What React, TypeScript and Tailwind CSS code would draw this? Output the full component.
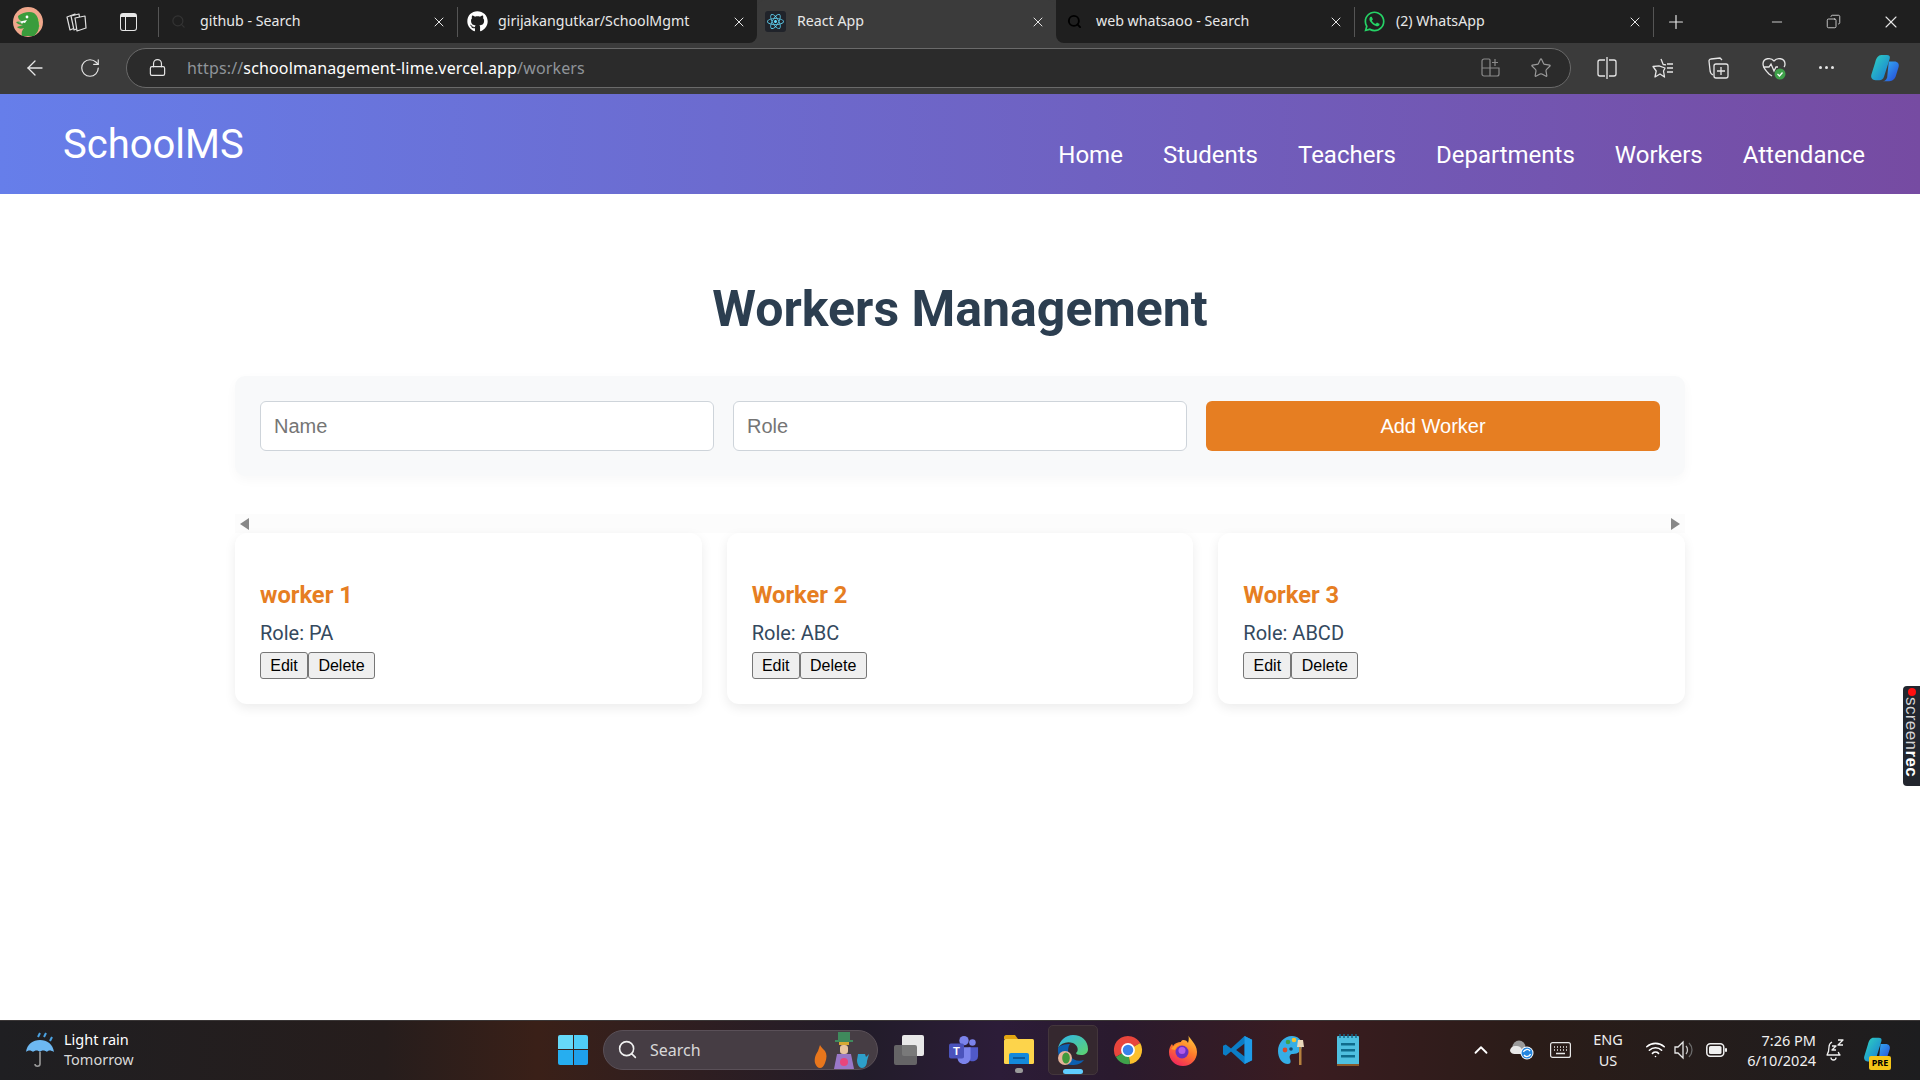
import { FaGithub, FaReact, FaWhatsapp } from "react-icons/fa6";
import { ArrowLeft, ChevronUp, Copy, Lock, Minus, Plus, RotateCw, Search, Star, Wifi, X } from "lucide-react";
import type { ReactNode } from "react";

const Copilot = ({ size = 30 }: { size?: number }) => (
  <svg width={size} height={size} viewBox="0 0 32 32">
    <defs>
      <linearGradient id="cpA" x1="0" y1="0" x2="1" y2="1">
        <stop offset="0" stopColor="#2fd6c0" />
        <stop offset="1" stopColor="#1877d6" />
      </linearGradient>
      <linearGradient id="cpB" x1="0" y1="0" x2="1" y2="1">
        <stop offset="0" stopColor="#35b6f5" />
        <stop offset="1" stopColor="#2546d6" />
      </linearGradient>
    </defs>
    <path d="M20 9h6c3.500 0 5.500 2.500 4.500 6l-2.800 9c-1 3.500-3.500 6-7.200 6h-7c2.500 0 4-1.500 4.800-4z" fill="url(#cpB)" />
    <path d="M12 2h6c2.500 0 3.800 1.200 3 4l-6 19c-.8 2.800-2.500 4-5 4H6c-3.500 0-5.500-2.500-4.500-6l4-13C6.700 5 9 2 12 2z" fill="url(#cpA)" />
  </svg>
);

const Dino = () => (
  <svg width="30" height="30" viewBox="0 0 30 30">
    <circle cx="15" cy="15" r="15" fill="#f0a78c" />
    <path d="M5 9c5-4 12-5 16-3 4 3 5 8 5 13 0 4-2 7-5 10H9c-1-3 0-6 2-8-3 1-5 1-7-1l6-2c-3 0-6-1-7-3l5-1C6 13 5 11 5 9z" fill="#3a9c3c" />
    <circle cx="14" cy="10" r="1.400" fill="#fff" />
    <path d="M5 15l9-2-2 3-2-.5-1 1.500-1-1.500z" fill="#fff" />
    <path d="M25 12l2 1-1 2zM26 18l2 1-2 1z" fill="#b7d84b" />
  </svg>
);

const Chrome = () => (
  <svg width="30" height="30" viewBox="0 0 32 32">
    <path d="M16 16L3 23.500A15 15 0 0 1 29 8.500z" fill="#e8453c" />
    <path d="M16 16L29 8.500A15 15 0 0 1 18 30.900z" fill="#fbc02d" />
    <path d="M16 16l2 14.900A15 15 0 0 1 3 23.500z" fill="#3fa14a" />
    <circle cx="16" cy="16" r="7.400" fill="#fff" />
    <circle cx="16" cy="16" r="5.600" fill="#3b82e8" />
  </svg>
);

const Firefox = () => (
  <svg width="30" height="32" viewBox="0 0 30 32">
    <defs>
      <linearGradient id="ffA" x1="0.8" y1="0" x2="0.3" y2="1">
        <stop offset="0" stopColor="#ffd23d" />
        <stop offset="0.5" stopColor="#ff7a2b" />
        <stop offset="1" stopColor="#f0265c" />
      </linearGradient>
    </defs>
    <path d="M20 0c0 4 9 9 9 18 0 8-6 14-14 14S1 26 1 18c0-3 1-6 3-8l1 2c2-3 5-4 8-4 0-1 1-2 2-2 3 0 4 1 5 3 1-3 1-6 0-9z" fill="url(#ffA)" />
    <circle cx="14" cy="18" r="6.500" fill="#6a2fc0" />
    <circle cx="14" cy="16.500" r="3.500" fill="#b35ae6" />
    <path d="M3 15c3-4 7-6 11-5-4 1-6 3-7 6z" fill="#ff9c2b" />
  </svg>
);

const VSCode = () => (
  <svg width="30" height="30" viewBox="0 0 32 32">
    <path d="M23 1L8.500 14.500 3 10 0 11.500v9L3 22l5.500-4.500L23 31l8-4V5zm0 8v14l-9-7z" fill="#0b7dc6" />
    <path d="M23 1l8 4v22l-8 4z" fill="#1f9ce8" />
  </svg>
);

const Palette = () => (
  <svg width="30" height="30" viewBox="0 0 30 30">
    <path d="M14 1C6 1 0 8 0 16c0 7 4 13 10 13 3 0 3-3 2-5-1-3 0-5 3-5 5 0 9-3 9-9 0-5-4-9-10-9z" fill="#35aee6" />
    <circle cx="7" cy="15" r="2.400" fill="#d94a2b" />
    <circle cx="10" cy="7" r="2.300" fill="#3fa14a" />
    <circle cx="16" cy="5" r="2.300" fill="#f4c430" />
    <circle cx="13" cy="14" r="1.800" fill="#164a6b" />
    <rect x="21" y="11" width="2.500" height="19" fill="#b5803e" />
    <path d="M20 5h5l1 7h-7z" fill="#ead9bb" />
  </svg>
);

const Notepad = () => (
  <svg width="24" height="32" viewBox="0 0 24 32">
    <rect x="1" y="2" width="22" height="30" rx="1" fill="#4fc0e0" />
    <rect x="1" y="30" width="22" height="2" fill="#8a5a2b" />
    <rect x="5" y="9" width="14" height="2.500" fill="#0f6c8c" />
    <rect x="5" y="15" width="14" height="2.500" fill="#0f6c8c" />
    <rect x="5" y="21" width="14" height="2.500" fill="#0f6c8c" />
    <path d="M4 0v4M8 0v4M12 0v4M16 0v4M20 0v4" stroke="#16688a" strokeWidth="1.500" />
  </svg>
);

const Explorer = () => (
  <svg width="30" height="30" viewBox="0 0 30 30">
    <path d="M0 2c0-1 1-2 2-2h9l3 4H0z" fill="#e2a512" />
    <rect x="0" y="4" width="30" height="25" rx="1.500" fill="#fdd44b" />
    <path d="M5 20a2 2 0 0 1 2-2h16a2 2 0 0 1 2 2v9H5z" fill="#1489dc" />
    <rect x="9" y="22" width="12" height="2" fill="#0d5c9c" />
  </svg>
);

const Edge = () => (
  <svg width="32" height="32" viewBox="0 0 32 32">
    <defs>
      <linearGradient id="edA" x1="0" y1="0" x2="1" y2="1">
        <stop offset="0" stopColor="#2fb6ee" />
        <stop offset="1" stopColor="#5ed36a" />
      </linearGradient>
    </defs>
    <path d="M1 14C3 6 9 1 16 1c9 0 15 6 15 14 0 4-3 6-7 6-3 0-5-1-5-2 3-2 2-8-3-10-6-2-12 0-15 5z" fill="url(#edA)" />
    <path d="M1 14c-1 9 5 17 14 17 5 0 9-1 12-5-6 2-11 0-14-4-3-4-2-9 0-12-5 0-10 1-12 4z" fill="#0c5fb0" />
    <circle cx="8" cy="24" r="7" fill="#e5b49a" />
    <ellipse cx="9" cy="24" rx="3.800" ry="5.500" fill="#3f9a3c" />
  </svg>
);

const Teams = () => (
  <svg width="30" height="30" viewBox="0 0 32 32">
    <circle cx="25" cy="8" r="3.500" fill="#7b83eb" />
    <circle cx="16" cy="6" r="5" fill="#7b83eb" />
    <path d="M21 13h10v9c0 4-3 6-6 6-2 0-3-1-4-2z" fill="#5059c9" />
    <path d="M9 13h14v11c0 4-3 7-7 7s-7-3-7-7z" fill="#7b83eb" />
    <rect x="0" y="9" width="16" height="16" rx="2" fill="#4b53bc" />
    <text x="8" y="21.500" fontSize="12" fontWeight="700" textAnchor="middle" fill="#fff" fontFamily="Liberation Sans, sans-serif">T</text>
  </svg>
);

const WinLogo = () => (
  <div className="grid grid-cols-2 gap-[1px] w-[30px] h-[30px]">
    <div className="rounded-tl-[2px] bg-[#66d9f8]" />
    <div className="rounded-tr-[2px] bg-[#4fcdf7]" />
    <div className="rounded-bl-[2px] bg-[#26aef0]" />
    <div className="rounded-br-[2px] bg-[#1fa0ec]" />
  </div>
);

const Mascot = () => (
  <svg width="56" height="38" viewBox="0 0 56 38">
    <path d="M6 14c1 2 3 4 5 6 2 3 2 7 0 12-1 3-3 5-5 5s-4-2-5-5c-1-5 1-9 3-12z" fill="#e8761c" />
    <rect x="24" y="1" width="12" height="9" fill="#3f8a5c" />
    <rect x="21" y="9" width="18" height="2" fill="#3f8a5c" />
    <rect x="25" y="11" width="10" height="3" fill="#d6a832" />
    <rect x="26" y="14" width="8" height="9" rx="3" fill="#e8c4a0" />
    <path d="M23 23h14l3 15H20z" fill="#9a78c8" />
    <circle cx="30" cy="31" r="4" fill="#e8457c" />
    <path d="M44 23h7l1 3 3-3-2 7c0 4-2 7-5 7s-5-4-5-8z" fill="#2d9fc9" />
  </svg>
);

const TabsIcon = () => (
  <svg width="24" height="24" viewBox="0 0 24 24" fill="#1f1f1f" stroke="#e0e0e0" strokeWidth="1.200" strokeLinejoin="round">
    <path d="M2 7l8-3 2 13-7 3z" />
    <path d="M6 6l8-2 2 13-7 3z" />
    <path d="M10 8l10-2 1 12-9 3z" />
  </svg>
);

const AppsAdd = () => (
  <svg width="20" height="20" viewBox="0 0 20 20" fill="none" stroke="#8a8a8a" strokeWidth="1.200">
    <path d="M3 1h5a1 1 0 0 1 1 1v16H3a2 2 0 0 1-2-2V3a2 2 0 0 1 2-2zM9 10h9v6a2 2 0 0 1-2 2H9M1 10h8M14 1v7M11 4.500h6" />
  </svg>
);

const SplitIcon = () => (
  <svg width="20" height="22" viewBox="0 0 20 22" fill="none" stroke="#e6e6e6" strokeWidth="1.300">
    <path d="M8 3H3a2 2 0 0 0-2 2v12a2 2 0 0 0 2 2h5M12 3h5a2 2 0 0 1 2 2v12a2 2 0 0 1-2 2h-5M10 0v22" />
  </svg>
);

const FavIcon = () => (
  <svg width="22" height="22" viewBox="0 0 22 22" fill="none" stroke="#e6e6e6" strokeWidth="1.300" strokeLinejoin="round">
    <path d="M9 2l2.200 5.500 2.800.3M13 11l-1.500 3 1 6-4.500-3-5 3 1.200-6L1 9.500l6-.7zM15 7h6M15 11h6M15 15h6" />
  </svg>
);

const CollectionsIcon = () => (
  <svg width="22" height="24" viewBox="0 0 22 24" fill="none" stroke="#e6e6e6" strokeWidth="1.300">
    <path d="M15 4l-2-2-9 1a2 2 0 0 0-2 2l1 9c0 2 1 4 3 5" />
    <rect x="7" y="8" width="14" height="14" rx="2" />
    <path d="M14 11v8M10 15h8" />
  </svg>
);

const HealthIcon = () => (
  <svg width="24" height="24" viewBox="0 0 24 24" fill="none" stroke="#e6e6e6" strokeWidth="1.300">
    <path d="M12 5C9 1 1 2 1 8c0 4 3 7 6 10l3 2M12 5c3-4 11-3 11 3 0 1 0 2-1 3M1 11h6l2-3 3 7 2-4h2" />
    <circle cx="18" cy="18" r="5.500" fill="#3fa14a" stroke="none" />
    <path d="M15.500 18l2 2 3-3.500" stroke="#ffffff" />
  </svg>
);

const CloudSync = () => (
  <svg width="24" height="20" viewBox="0 0 24 20">
    <circle cx="9" cy="7" r="6.500" fill="#9a9a9a" />
    <path d="M0 11a5 5 0 0 1 5-5h2a5 5 0 0 1 5 6v2H5a5 5 0 0 1-5-3z" fill="#e8e8e8" />
    <circle cx="17" cy="13" r="6.500" fill="#ffffff" />
    <circle cx="17" cy="13" r="5.500" fill="#2386e0" />
    <path d="M13.500 12a3.700 3.700 0 0 1 6.500-1M20.500 14a3.700 3.700 0 0 1-6.500 1" fill="none" stroke="#fff" strokeWidth="1.300" />
  </svg>
);

const KeyboardIcon = () => (
  <svg width="21" height="16" viewBox="0 0 21 16" fill="none" stroke="#e8e8e8" strokeWidth="1.200">
    <rect x="0.600" y="0.600" width="19.800" height="14.800" rx="2" />
    <path d="M4 5h1M7 5h1M10 5h1M13 5h1M16 5h1M4 8h1M7 8h1M10 8h1M13 8h1M16 8h1M6 11.500h9" strokeWidth="1.400" />
  </svg>
);

const SpeakerIcon = () => (
  <svg width="22" height="22" viewBox="0 0 22 22" fill="none" stroke="#e8e8e8" strokeWidth="1.300">
    <path d="M1 8h3l5-5v16l-5-5H1z" />
    <path d="M12 7c2 2 2 6 0 8" stroke="#c9c9c9" />
    <path d="M15 4c4 4 4 10 0 14" stroke="#6b6b6b" />
  </svg>
);

const BatteryIcon = () => (
  <svg width="21" height="14" viewBox="0 0 21 14">
    <rect x="0.800" y="0.800" width="17" height="12.400" rx="3.500" fill="none" stroke="#f0f0f0" strokeWidth="1.500" />
    <rect x="3" y="3" width="12.500" height="8" rx="1.500" fill="#f0f0f0" />
    <rect x="19" y="5" width="2" height="4" rx="1" fill="#f0f0f0" />
  </svg>
);

const BellZ = () => (
  <svg width="20" height="22" viewBox="0 0 20 22" fill="none" stroke="#f0f0f0" strokeWidth="1.300" strokeLinejoin="round">
    <path d="M7 3a6 6 0 0 0-3 5c0 3 0 5-2 8h13c-1-1-1.500-2-1.700-3M6 18.500a2.500 2.500 0 0 0 5 0" />
    <path d="M7 7h4l-4 4h4M13 1h5l-5 5h5" />
  </svg>
);

const Tab = ({ title, icon, width, textClass }: { title: string; icon: ReactNode; width: string; textClass: string }) => (
  <div className={`flex items-center h-full ${width}`}>
    <div className="w-[1px] h-[30px] bg-[#555555]" />
    <div className="w-[35px] flex justify-center ml-[2px]">{icon}</div>
    <span className={`flex-1 pb-[2px] text-[14.2px] text-[#e8e8e8] ${textClass}`}>{title}</span>
    <X size={16} strokeWidth={1.500} className="text-[#e6e6e6] mr-[10px]" />
  </div>
);

const NavLink = ({ children }: { children: string }) => (
  <a className="text-[24px] leading-[28px] text-white">{children}</a>
);

const Worker = ({ name, role }: { name: string; role: string }) => (
  <div className="flex-1 h-[171px] rounded-[12px] bg-white shadow-[0_4px_12px_rgba(0,0,0,0.08)] px-[25px] pt-[48px] font-['Roboto',sans-serif]">
    <h3 className="text-[23.700px] leading-[28px] font-bold text-[#e67e22]">{name}</h3>
    <p className="mt-[12px] text-[20px] leading-[24px] text-[#34495e]">Role: {role}</p>
    <div className="flex mt-[7px] font-['Liberation_Sans',sans-serif]">
      <button className="w-[48px] h-[27px] text-[16px] text-black bg-[#efefef] border border-[#767676] rounded-[3px]">Edit</button>
      <button className="w-[67px] h-[27px] text-[16px] text-black bg-[#efefef] border border-[#767676] rounded-[3px]">Delete</button>
    </div>
  </div>
);

const TaskIcon = ({ children }: { children: ReactNode }) => (
  <div className="w-[55px] h-[50px] flex items-center justify-center">{children}</div>
);

const App = () => {
  return (
    <div className="relative w-[1920px] h-[1080px] overflow-hidden flex flex-col bg-white font-['Noto_Sans',sans-serif]">
      {/* browser chrome */}
      <div className="h-[94px] shrink-0 bg-[#3b3b3b]">
        <div className="flex h-[43px]">
          <div className="w-[757px] flex items-center bg-[#1f1f1f] rounded-br-lg">
            <div className="ml-[13px] w-[30px] flex justify-center"><Dino /></div>
            <div className="ml-[22px]"><TabsIcon /></div>
            <div className="ml-[31px] w-[17px] h-[18px] border-[1.500px] border-[#e6e6e6] rounded-[3px] border-t-[4px] flex">
              <div className="w-[5px] border-r border-[#e6e6e6]" />
            </div>
            <div className="w-[21px]" />
            <Tab title="github - Search" width="w-[299px]" textClass="ml-[4px]" icon={<Search size={15} className="text-[#333333]" />} />
            <Tab title="girijakangutkar/SchoolMgmt" width="flex-1" textClass="ml-[3px]" icon={<FaGithub size={21} className="text-white" />} />
          </div>
          <div className="w-[299px] flex items-center rounded-t-lg bg-[#3b3b3b]">
            <div className="ml-[8px] w-[21px] h-[21px] rounded-[3px] bg-[#20232a] flex items-center justify-center">
              <FaReact size={17} className="text-[#61dafb]" />
            </div>
            <span className="ml-[11px] flex-1 pb-[2px] text-[14.2px] text-[#e8e8e8]">React App</span>
            <X size={16} strokeWidth={1.500} className="text-[#e6e6e6] mr-[10px]" />
          </div>
          <div className="flex-1 flex items-center bg-[#1f1f1f] rounded-bl-lg">
            <div className="w-[298px] flex items-center h-full">
              <div className="w-[36px] flex justify-center"><Search size={15} strokeWidth={3} className="text-black" /></div>
              <span className="ml-[4px] flex-1 pb-[2px] text-[14.2px] text-[#e8e8e8]">web whatsaoo - Search</span>
              <X size={16} strokeWidth={1.500} className="text-[#e6e6e6] mr-[10px]" />
            </div>
            <Tab title="(2) WhatsApp" width="w-[299px]" textClass="ml-[4px]" icon={<FaWhatsapp size={23} className="text-[#25d366]" />} />
            <div className="w-[1px] h-[30px] bg-[#555555]" />
            <Plus size={22} strokeWidth={1.300} className="ml-[11px] text-[#e6e6e6]" />
            <Minus size={16} strokeWidth={1.300} className="ml-[82px] text-[#e6e6e6]" />
            <Copy size={15} strokeWidth={1.300} className="ml-[41px] text-[#e6e6e6] -scale-x-100" />
            <X size={20} strokeWidth={1.300} className="ml-[40px] text-[#e6e6e6]" />
          </div>
        </div>
        <div className="flex items-center h-[39px] mt-[5px]">
          <ArrowLeft size={24} strokeWidth={1.300} className="ml-[23px] text-[#e6e6e6]" />
          <RotateCw size={22} strokeWidth={1.300} className="ml-[32px] text-[#e6e6e6]" />
          <div className="ml-[25px] w-[1445px] h-[40px] flex items-center rounded-full bg-[#2b2b2b] border border-[#6a6a6a]">
            <Lock size={19} strokeWidth={1.500} className="ml-[21px] text-[#e6e6e6]" />
            <span className="ml-[20px] text-[16px] flex-1 tracking-[0.15px] text-[#8f9499]">
              https://<span className="text-white">schoolmanagement-lime.vercel.app</span>/workers
            </span>
            <AppsAdd />
            <Star size={22} strokeWidth={1.300} className="ml-[29px] mr-[18px] text-[#9a9a9a]" />
          </div>
          <div className="ml-[26px]"><SplitIcon /></div>
          <div className="ml-[35px]"><FavIcon /></div>
          <div className="ml-[33px]"><CollectionsIcon /></div>
          <div className="ml-[33px]"><HealthIcon /></div>
          <div className="ml-[33px] flex gap-[3px]">
            <div className="w-[3px] h-[3px] rounded-full bg-[#e6e6e6]" />
            <div className="w-[3px] h-[3px] rounded-full bg-[#e6e6e6]" />
            <div className="w-[3px] h-[3px] rounded-full bg-[#e6e6e6]" />
          </div>
          <div className="ml-[36px]"><Copilot /></div>
        </div>
      </div>

      {/* navbar */}
      <nav className="h-[100px] shrink-0 flex items-start justify-between pl-[63px] pr-[55px] bg-[linear-gradient(90deg,#667eea,#764ba2)] font-['Roboto',sans-serif]">
        <span className="mt-[27px] text-[40px] leading-[47px] text-white">SchoolMS</span>
        <div className="flex gap-[40px] mt-[47px]">
          <NavLink>Home</NavLink>
          <NavLink>Students</NavLink>
          <NavLink>Teachers</NavLink>
          <NavLink>Departments</NavLink>
          <NavLink>Workers</NavLink>
          <NavLink>Attendance</NavLink>
        </div>
      </nav>

      {/* page */}
      <main className="flex-1 px-[235px]">
        <h1 className="mt-[87px] text-center text-[50px] leading-[56px] font-bold text-[#2c3e50] font-['Roboto',sans-serif]">Workers Management</h1>
        <div className="mt-[39px] h-[100px] grid grid-cols-3 items-center gap-[19px] px-[25px] rounded-[10px] bg-[#f8f9fa] shadow-[0_4px_12px_rgba(0,0,0,0.03)] font-['Liberation_Sans',sans-serif]">
          <input placeholder="Name" className="w-full h-[50px] px-[13px] text-[20px] bg-white border border-[#ced4da] rounded-[6px] placeholder:text-[#757575]" />
          <input placeholder="Role" className="w-full h-[50px] px-[13px] text-[20px] bg-white border border-[#ced4da] rounded-[6px] placeholder:text-[#757575]" />
          <button className="h-[50px] text-[20px] text-white bg-[#e67e22] rounded-[6px]">Add Worker</button>
        </div>
        <div className="mt-[38px] h-[19px] flex items-center justify-between px-[5px] bg-[#fcfcfc]">
          <svg width="10" height="12" viewBox="0 0 10 12"><path d="M9 0v12L0 6z" fill="#888888" /></svg>
          <svg width="10" height="12" viewBox="0 0 10 12"><path d="M1 0v12l9-6z" fill="#888888" /></svg>
        </div>
        <div className="flex gap-[25px]">
          <Worker name="worker 1" role="PA" />
          <Worker name="Worker 2" role="ABC" />
          <Worker name="Worker 3" role="ABCD" />
        </div>
      </main>

      {/* screenrec badge */}
      <div className="absolute right-0 top-[686px] w-[17px] h-[100px] rounded-l-[4px] bg-[#22262e] flex flex-col items-center pt-[2px]">
        <div className="w-[8px] h-[8px] rounded-full bg-[#ff1010] shrink-0" />
        <span className="mt-[1px] [writing-mode:vertical-rl] text-[17px] leading-[17px] tracking-[0.4px] text-[#d5d5d5] font-['Liberation_Sans',sans-serif]">
          screen<b className="text-white">rec</b>
        </span>
      </div>

      {/* taskbar */}
      <footer className="h-[60px] shrink-0 flex items-center pb-[2px] border-t border-[#3a3636] bg-[linear-gradient(90deg,#1f1f22_0%,#261d1c_20%,#3a2018_28%,#221c2a_45%,#2c1c38_52%,#2a1a2e_58%,#3a1c20_68%,#2a1c18_80%,#1d1d1f_100%)]">
        <div className="flex items-center w-[558px] shrink-0 pl-[24px]">
          <svg width="32" height="36" viewBox="0 0 32 36">
            <path d="M2 20C3 12 9 8 16 8s13 4 14 12c-3-2-6-2-7 0-2-2-6-2-7 0-2-2-5-2-7 0-2-2-5-2-7 0z" fill="#6db8f2" />
            <path d="M16 20v12c0 3-5 3-5 0" fill="none" stroke="#9a9a9a" strokeWidth="1.600" />
            <path d="M16 1l-2 4M22 1l-2 4M28 5l-2 4" stroke="#4ba3e3" strokeWidth="2" />
          </svg>
          <div className="ml-[8px] pb-[2px] text-[14.500px] leading-[20px]">
            <div className="text-white">Light rain</div>
            <div className="text-[#d8d8d8]">Tomorrow</div>
          </div>
        </div>
        <WinLogo />
        <div className="ml-[15px] w-[275px] h-[40px] shrink-0 flex items-center rounded-full bg-[#463d44] border border-[#5a5058]">
          <Search size={21} strokeWidth={1.800} className="ml-[13px] text-[#f0f0f0]" />
          <span className="ml-[12px] flex-1 text-[16px] text-[#d8d8d8]">Search</span>
          <Mascot />
          <div className="w-[7px]" />
        </div>
        <div className="ml-[3px] flex items-center">
          <TaskIcon>
            <div className="relative w-[30px] h-[30px]">
              <div className="absolute right-0 top-0 w-[22px] h-[21px] rounded-[2px] bg-[#e8e8e8]" />
              <div className="absolute left-0 bottom-0 w-[23px] h-[20px] rounded-[2px] bg-[#6d6d6d]/90" />
            </div>
          </TaskIcon>
          <TaskIcon><Teams /></TaskIcon>
          <TaskIcon>
            <div className="relative">
              <Explorer />
              <div className="absolute left-[11px] -bottom-[8px] w-[8px] h-[5px] rounded-full bg-[#9a9a9a]" />
            </div>
          </TaskIcon>
          <div className="relative w-[50px] h-[50px] mx-[2px] rounded-[5px] bg-[#35282f] border border-[#43363c] flex items-center justify-center">
            <Edge />
            <div className="absolute left-[14px] bottom-[0px] w-[20px] h-[5px] rounded-full bg-[#60cdff]" />
          </div>
          <TaskIcon><Chrome /></TaskIcon>
          <TaskIcon><Firefox /></TaskIcon>
          <TaskIcon><VSCode /></TaskIcon>
          <TaskIcon><Palette /></TaskIcon>
          <TaskIcon><Notepad /></TaskIcon>
        </div>
        <ChevronUp size={22} strokeWidth={2} className="ml-[95px] text-white" />
        <div className="ml-[18px]"><CloudSync /></div>
        <div className="ml-[16px]"><KeyboardIcon /></div>
        <div className="ml-[10px] w-[54px] text-center text-[14.500px] leading-[21px] text-[#eeeeee]">
          <div>ENG</div>
          <div>US</div>
        </div>
        <Wifi size={21} strokeWidth={1.800} className="ml-[10px] text-white" />
        <div className="ml-[8px]"><SpeakerIcon /></div>
        <div className="ml-[10px]"><BatteryIcon /></div>
        <div className="ml-[11px] w-[78px] text-right text-[14.500px] leading-[20px] text-[#f0f0f0]">
          <div>7:26 PM</div>
          <div>6/10/2024</div>
        </div>
        <div className="ml-[9px]"><BellZ /></div>
        <div className="relative ml-[18px]">
          <Copilot size={28} />
          <span className="absolute -bottom-[6px] left-[6px] w-[22px] h-[14px] rounded-[2px] bg-[#f5c518] text-[9px] leading-[14px] text-center font-bold text-black">PRE</span>
        </div>
      </footer>
    </div>
  );
};

export default App;
